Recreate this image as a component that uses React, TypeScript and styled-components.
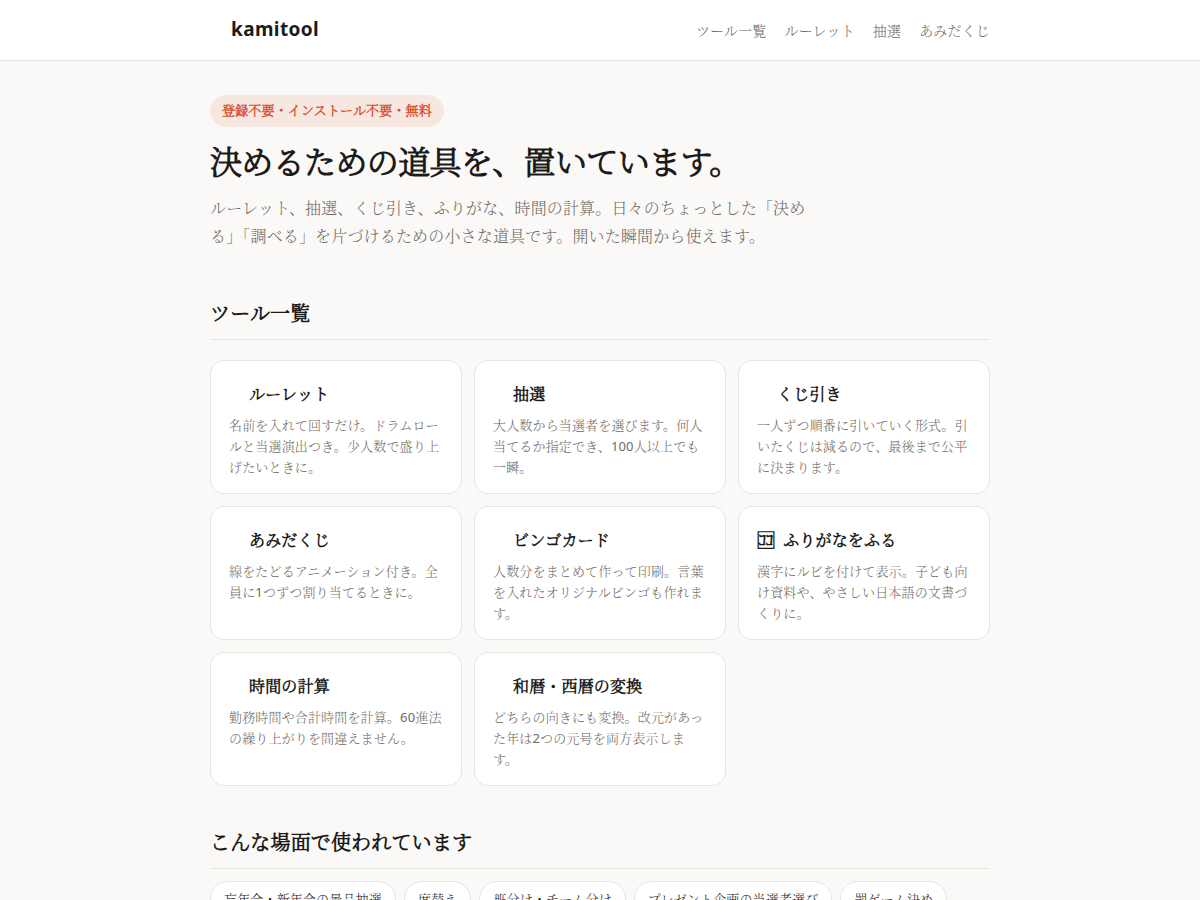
import React from 'react';
import styled, { createGlobalStyle } from 'styled-components';

const Global = createGlobalStyle`
  *, *::before, *::after { box-sizing: border-box; }
  body {
    margin: 0;
    background: #faf9f7;
    color: #1c1b19;
    font-family: "Noto Sans", "Noto Serif CJK JP Light", "Noto Serif CJK JP", serif;
    font-size: 16px;
    line-height: 28px;
    letter-spacing: 0.01em;
  }
`;

const Header = styled.header`
  background: #ffffff;
  border-bottom: 1px solid #e7e5df;
`;

const Container = styled.div`
  max-width: 820px;
  margin: 0 auto;
  padding: 0 20px;
`;

const HeaderInner = styled(Container)`
  min-height: 60px;
  padding-top: 15px;
  display: flex;
  align-items: baseline;
  justify-content: space-between;
`;

const Brand = styled.a`
  padding-left: 21px;
  font-size: 19px;
  font-weight: 700;
  letter-spacing: 0.02em;
  color: inherit;
  text-decoration: none;
`;

const Nav = styled.nav`
  display: flex;
  gap: 18px;
`;

const NavLink = styled.a`
  font-size: 14px;
  color: #6f6a63;
  text-decoration: none;
`;

const Hero = styled.section`
  padding: 34px 0 7px;
`;

const Badge = styled.span`
  display: inline-block;
  padding: 4px 12px 6px;
  border-radius: 999px;
  background: #f7e7e1;
  color: #d6502f;
  font-size: 13px;
  line-height: 22px;
  font-weight: 700;
`;

const Title = styled.h1`
  margin: 12px 0 9px;
  font-size: 32px;
  line-height: 46px;
  letter-spacing: -0.02em;
`;

const Lead = styled.p`
  margin: 0;
  max-width: 600px;
  color: #6f6a63;
`;

const Section = styled.section`
  margin-top: 40px;
`;

const SectionTitle = styled.h2`
  margin: 0;
  padding-bottom: 8px;
  border-bottom: 1px solid #e7e5df;
  font-size: 20px;
  line-height: 34px;
`;

const CardGrid = styled.div`
  display: grid;
  grid-template-columns: repeat(auto-fill, minmax(240px, 1fr));
  gap: 12px;
  margin-top: 20px;
`;

const Card = styled.a`
  padding: 16px 18px 15px;
  background: #ffffff;
  border: 1px solid #e7e5df;
  border-radius: 14px;
  color: inherit;
  text-decoration: none;
`;

const CardTitle = styled.h3`
  display: flex;
  align-items: center;
  gap: 8px;
  margin: 0 0 4px;
  font-size: 16px;
  line-height: 34px;
`;

const CardIcon = styled.span`
  min-width: 12px;
  font-size: 18px;
`;

const CardText = styled.p`
  margin: 0;
  font-size: 13px;
  line-height: 21px;
  color: #6f6a63;
`;

const Chips = styled.ul`
  display: flex;
  flex-wrap: wrap;
  gap: 8px;
  margin: 12px 0 0;
  padding: 0;
  list-style: none;
`;

const Chip = styled.li`
  padding: 6px 13px;
  background: #ffffff;
  border: 1px solid #e7e5df;
  border-radius: 999px;
  font-size: 13px;
  line-height: 22px;
`;

const links = ['ツール一覧', 'ルーレット', '抽選', 'あみだくじ'];

const tools = [
  { name: 'ルーレット', text: '名前を入れて回すだけ。ドラムロールと当選演出つき。少人数で盛り上げたいときに。' },
  { name: '抽選', text: '大人数から当選者を選びます。何人当てるか指定でき、100人以上でも一瞬。' },
  { name: 'くじ引き', text: '一人ずつ順番に引いていく形式。引いたくじは減るので、最後まで公平に決まります。' },
  { name: 'あみだくじ', text: '線をたどるアニメーション付き。全員に1つずつ割り当てるときに。' },
  { name: 'ビンゴカード', text: '人数分をまとめて作って印刷。言葉を入れたオリジナルビンゴも作れます。' },
  { name: 'ふりがなをふる', icon: '🈁', text: '漢字にルビを付けて表示。子ども向け資料や、やさしい日本語の文書づくりに。' },
  { name: '時間の計算', text: '勤務時間や合計時間を計算。60進法の繰り上がりを間違えません。' },
  { name: '和暦・西暦の変換', text: 'どちらの向きにも変換。改元があった年は2つの元号を両方表示します。' },
];

const scenes = ['忘年会・新年会の景品抽選', '席替え', '班分け・チーム分け', 'プレゼント企画の当選者選び', '罰ゲーム決め'];

export default function App() {
  return (
    <>
      <Global />
      <Header>
        <HeaderInner>
          <Brand href="#">kamitool</Brand>
          <Nav>
            {links.map((l) => <NavLink key={l} href="#">{l}</NavLink>)}
          </Nav>
        </HeaderInner>
      </Header>
      <Container as="main">
        <Hero>
          <Badge>登録不要・インストール不要・無料</Badge>
          <Title>決めるための道具を、置いています。</Title>
          <Lead>
            ルーレット、抽選、くじ引き、ふりがな、時間の計算。日々のちょっとした「決める」「調べる」を片づけるための小さな道具です。開いた瞬間から使えます。
          </Lead>
        </Hero>
        <Section>
          <SectionTitle>ツール一覧</SectionTitle>
          <CardGrid>
            {tools.map((t) => (
              <Card key={t.name} href="#">
                <CardTitle><CardIcon>{t.icon}</CardIcon>{t.name}</CardTitle>
                <CardText>{t.text}</CardText>
              </Card>
            ))}
          </CardGrid>
        </Section>
        <Section>
          <SectionTitle>こんな場面で使われています</SectionTitle>
          <Chips>
            {scenes.map((s) => <Chip key={s}>{s}</Chip>)}
          </Chips>
        </Section>
      </Container>
    </>
  );
}
